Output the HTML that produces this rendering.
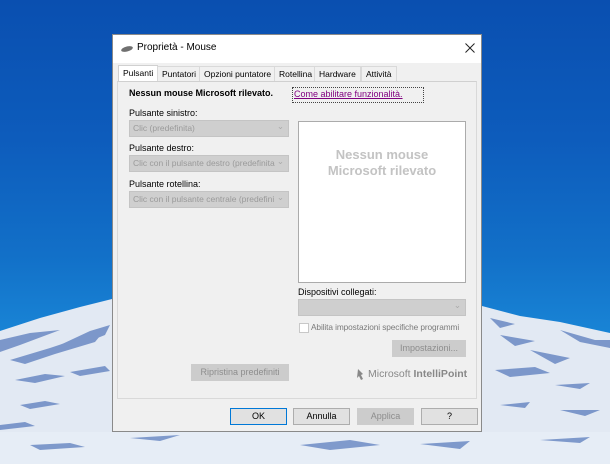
<!DOCTYPE html>
<html><head><meta charset="utf-8"><style>
*{margin:0;padding:0;box-sizing:border-box}
body{width:610px;height:464px;overflow:hidden;position:relative;font-family:"Liberation Sans",sans-serif;font-size:9px;color:#000;background:linear-gradient(#0a4fb0 0%,#0d5cbc 30%,#1270c8 55%,#1a88d8 75%,#1c8ddc 100%)}
.a{position:absolute}
.dlg{left:112px;top:34px;width:370px;height:398px;background:#f0f0f0;border:1px solid #8a8a8a}
.tb{left:0;top:0;width:368px;height:28px;background:#fff}
.cmb{background:#cfcfcf;border:1px solid #c4c4c4;color:#9a9a9a;font-size:8.5px;padding:2px 3px;height:17px;white-space:nowrap;overflow:hidden}
.cmb:after{content:"⌄";position:absolute;right:4px;top:0;color:#aaa}
.btn{border:1px solid #adadad;background:#e1e1e1;height:17px;text-align:center;line-height:15px;font-size:9px}
.dis{background:#cccccc;border-color:#cccccc;color:#8d8d8d}
.tab{top:0;height:16px;line-height:15px;padding:0 4px;font-size:8.5px;border:1px solid #d9d9d9;border-bottom:none;background:#f0f0f0;color:#000}
</style></head><body>
<svg class="a" style="left:0;top:0" width="610" height="464">
<polygon points="0,331 40,318 80,307 112,299 112,464 0,464" fill="#e2e9f3"/>
<polygon points="482,306 520,316 560,322 610,333 610,464 482,464" fill="#e2e9f3"/>
<polygon points="0,464 610,464 610,432 0,432" fill="#e6edf6"/>
<g fill="#3a62b0" opacity=".6">
<path d="M0,340 L30,333 L60,330 L20,345 L0,352Z"/>
<path d="M10,360 l40,-12 l30,-10 l25,-8 l-10,12 l-40,12 l-30,10z"/>
<path d="M60,345 l30,-14 l20,-6 l-5,10 l-30,12z"/>
<path d="M15,380 l30,-6 l20,2 l-30,7z"/>
<path d="M70,372 l35,-6 l5,5 l-30,5z"/>
<path d="M20,405 l25,-4 l15,3 l-30,5z"/>
<path d="M0,425 l25,-3 l10,4 l-35,4z"/>
<path d="M490,318 l25,6 l-15,4z M500,335 l35,6 l-20,5z M530,350 l40,8 l-15,6z M560,330 l35,10 l15,0 l0,8 l-30,-6z"/>
<path d="M495,370 l40,-3 l15,6 l-40,4z M555,385 l35,-2 l-10,6z M500,405 l30,-3 l-5,6z M560,410 l40,0 l-15,6z"/>
<path d="M30,445 l40,-2 l15,4 l-45,3z M130,438 l50,-3 l-20,6z M300,445 l50,-5 l30,5 l-50,5z M420,444 l50,-3 l-10,8z M540,440 l50,-3 l-10,6z"/>
</g>
</svg>
<div class="a dlg">
<div class="a tb">
<svg class="a" style="left:7px;top:10px" width="14" height="8"><ellipse cx="7" cy="4" rx="6" ry="2.5" fill="#707070" transform="rotate(-15 7 4)"/></svg>
<div class="a" style="left:24px;top:7px;font-size:10px">Proprietà - Mouse</div>
<svg class="a" style="left:352px;top:8px" width="10" height="10"><path d="M0.5,0.5 L9.5,9.5 M9.5,0.5 L0.5,9.5" stroke="#222" stroke-width="1"/></svg>
</div>
<div class="a tab" style="left:5px;top:30px;height:17px;background:#fff;border-color:#d0d0d0">Pulsanti</div>
<div class="a tab" style="left:44px;top:31px">Puntatori</div>
<div class="a tab" style="left:86px;top:31px">Opzioni puntatore</div>
<div class="a tab" style="left:161px;top:31px">Rotellina</div>
<div class="a tab" style="left:201px;top:31px">Hardware</div>
<div class="a tab" style="left:248px;top:31px">Attività</div>
<div class="a" style="left:4px;top:46px;width:360px;height:318px;background:#f0f0f0;border:1px solid #d9d9d9;border-top-color:#d0d0d0"></div>
<div class="a" style="left:16px;top:53px;font-weight:bold;font-size:9px">Nessun mouse Microsoft rilevato.</div>
<div class="a" style="left:179px;top:52px;width:132px;height:16px;border:1px dotted #444;color:#800080;text-decoration:underline;padding:1px 1px;font-size:9px">Come abilitare funzionalità.</div>
<div class="a" style="left:16px;top:73px">Pulsante sinistro:</div>
<div class="a cmb" style="left:16px;top:85px;width:160px">Clic (predefinita)</div>
<div class="a" style="left:16px;top:108px">Pulsante destro:</div>
<div class="a cmb" style="left:16px;top:120px;width:160px;padding-right:14px">Clic con il pulsante destro (predefinita</div>
<div class="a" style="left:16px;top:144px">Pulsante rotellina:</div>
<div class="a cmb" style="left:16px;top:156px;width:160px;padding-right:14px">Clic con il pulsante centrale (predefini</div>
<div class="a" style="left:185px;top:86px;width:168px;height:162px;background:#fff;border:1px solid #ababab"></div>
<div class="a" style="left:185px;top:112px;width:168px;text-align:center;color:#c3c3c3;font-weight:bold;font-size:13px;line-height:16px">Nessun mouse<br>Microsoft rilevato</div>
<div class="a" style="left:185px;top:252px">Dispositivi collegati:</div>
<div class="a cmb" style="left:185px;top:264px;width:168px"></div>
<div class="a" style="left:186px;top:288px;width:10px;height:10px;background:#fff;border:1px solid #c8c8c8"></div>
<div class="a" style="left:198px;top:287px;color:#7a7a7a;font-size:8.3px;letter-spacing:-0.1px">Abilita impostazioni specifiche programmi</div>
<div class="a btn dis" style="left:279px;top:305px;width:74px">Impostazioni...</div>
<div class="a btn dis" style="left:78px;top:329px;width:98px">Ripristina predefiniti</div>
<svg class="a" style="left:243px;top:333px" width="9" height="13"><path d="M2,1 L7,6 L5,7 L7,11 L5,12 L3,8 L1,10Z" fill="#888"/></svg>
<div class="a" style="left:255px;top:333px;font-size:10.5px;color:#888">Microsoft <b>IntelliPoint</b></div>
<div class="a btn" style="left:117px;top:373px;width:57px;border:1px solid #0078d7">OK</div>
<div class="a btn" style="left:180px;top:373px;width:57px">Annulla</div>
<div class="a btn dis" style="left:244px;top:373px;width:57px">Applica</div>
<div class="a btn" style="left:308px;top:373px;width:57px">?</div>
</div>
</body></html>
